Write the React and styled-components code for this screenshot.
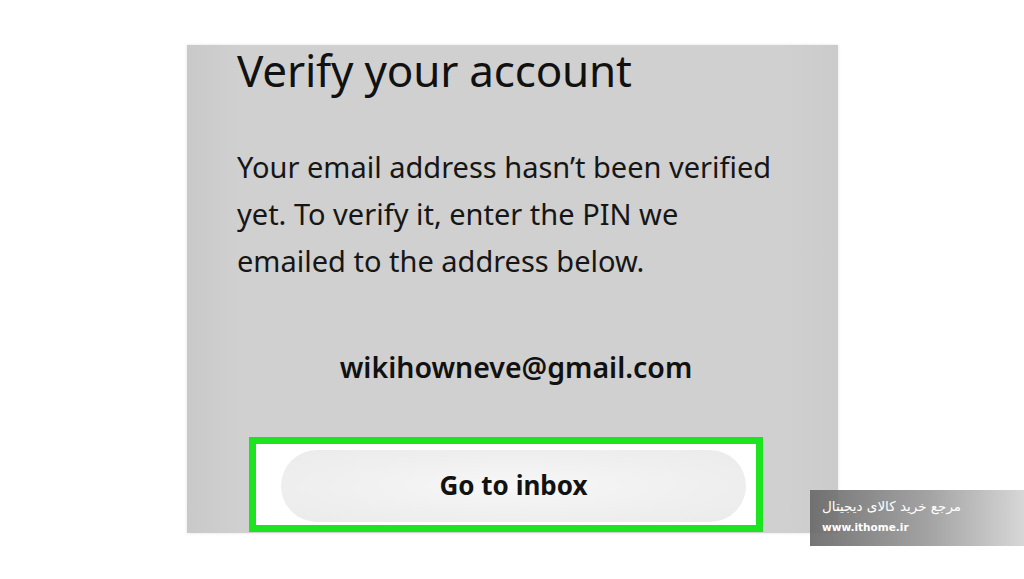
import React from "react";
import styled, { createGlobalStyle } from "styled-components";

const GlobalStyle = createGlobalStyle`
  html, body {
    margin: 0;
    padding: 0;
    background: #fff;
  }
  body {
    font-family: "Noto Sans", "Open Sans", sans-serif;
    overflow: hidden;
  }
`;

const App = () => (
  <Page>
    <GlobalStyle />
    <Panel>
      <Title>Verify your account</Title>
      <Body>
        Your email address hasn’t been verified yet. To verify it, enter the PIN we emailed to the address below.
      </Body>
      <Email>wikihowneve@gmail.com</Email>
      <Highlight>
        <InboxButton>Go to inbox</InboxButton>
      </Highlight>
    </Panel>
    <Watermark>
      <WatermarkTitle dir="rtl">مرجع خرید کالای دیجیتال</WatermarkTitle>
      <WatermarkUrl>www.ithome.ir</WatermarkUrl>
    </Watermark>
  </Page>
);

const Page = styled.div`
  position: relative;
  width: 1024px;
  height: 579px;
  padding: 45px 0 0 187px;
  box-sizing: border-box;
  background: #fff;
`;

const Panel = styled.div`
  width: 651px;
  height: 488px;
  box-sizing: border-box;
  padding: 0 0 0 50px;
  background: linear-gradient(90deg, #c9c9c9 0%, #d0d0d0 8%, #d0d0d0 92%, #cbcbcb 100%);
  box-shadow: 0 0 3px rgba(0, 0, 0, 0.12);
  display: flex;
  flex-direction: column;
  color: #141414;
`;

const Title = styled.h1`
  margin: 0;
  font-size: 44px;
  font-weight: 400;
  line-height: 50px;
  letter-spacing: -0.2px;
  color: #111;
`;

const Body = styled.p`
  margin: 48px 0 0;
  width: 545px;
  font-size: 29px;
  line-height: 47px;
  font-weight: 400;
  color: #161616;
`;

const Email = styled.div`
  margin: 63px 0 0 -43px;
  text-align: center;
  font-size: 28.5px;
  font-weight: 600;
  line-height: 40px;
  color: #111;
`;

const Highlight = styled.div`
  margin: auto 0 1px 12px;
  width: 514px;
  height: 95px;
  box-sizing: border-box;
  border: 7px solid #1ce41e;
  background: #fff;
  padding: 6px 10px 0 25px;
`;

const InboxButton = styled.div`
  height: 72px;
  border-radius: 36px;
  background: radial-gradient(ellipse at center, #f7f7f7 0%, #efefef 60%, #ebebeb 100%);
  display: flex;
  align-items: center;
  justify-content: center;
  font-size: 26px;
  font-weight: 700;
  color: #121212;
  padding-bottom: 2px;
  box-sizing: border-box;
`;

const Watermark = styled.div`
  position: absolute;
  left: 810px;
  top: 490px;
  width: 214px;
  height: 56px;
  box-sizing: border-box;
  padding: 6px 0 0 12px;
  background: linear-gradient(90deg, rgba(105, 105, 105, 0.92) 0%, rgba(150, 150, 150, 0.88) 55%, rgba(205, 205, 205, 0.8) 100%);
  color: #fff;
  display: flex;
  flex-direction: column;
  align-items: flex-start;
  gap: 3px;
`;

const WatermarkTitle = styled.div`
  font-family: "DejaVu Sans", sans-serif;
  font-size: 13.5px;
  font-weight: 400;
  line-height: 20px;
  white-space: nowrap;
`;

const WatermarkUrl = styled.div`
  font-family: "DejaVu Sans", sans-serif;
  font-size: 10.5px;
  font-weight: 700;
  line-height: 16px;
  white-space: nowrap;
`;

export default App;
